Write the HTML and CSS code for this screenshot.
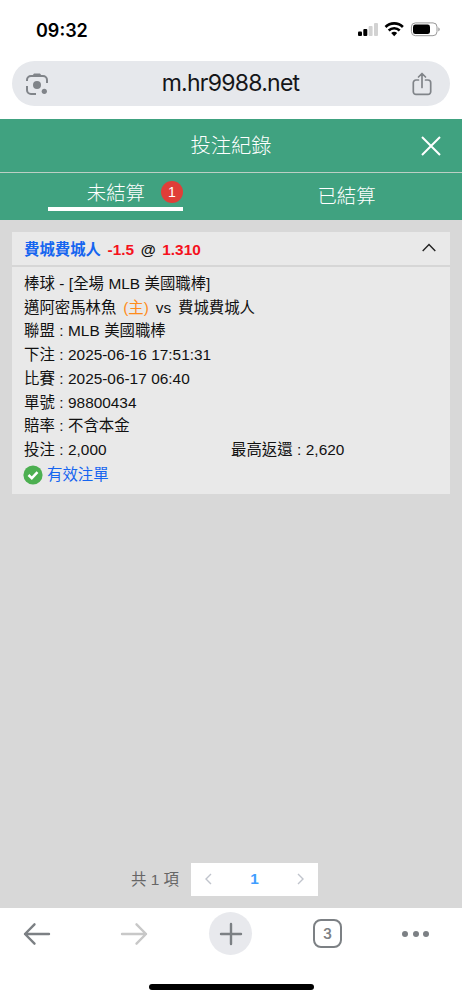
FILE: index.html
```html
<!DOCTYPE html>
<html lang="zh-Hant"><head>
    <meta charset="UTF-8">
    <meta name="viewport" content="width=device-width, initial-scale=1.0">
    <title>投注紀錄</title>
    <link rel="stylesheet" href="styles.css">
</head>
<body>
    <div class="status">
        <span class="time">09:32</span>
        <svg class="signals" width="84" height="16" viewBox="0 0 84 16">
            <rect x="1" y="9.5" width="4" height="4.5" rx="1"/>
            <rect x="6.3" y="7" width="4" height="7" rx="1"/>
            <rect x="11.6" y="4" width="4" height="10" rx="1" fill="#d2d2d2"/>
            <rect x="17" y="1" width="4" height="13" rx="1" fill="#d2d2d2"/>
            <g fill="none" stroke="#000" stroke-width="2.6">
                <path d="M28.5 5a12.3 12.3 0 0 1 17.4 0"/>
                <path d="M31.7 8.5a8 8 0 0 1 11 0"/>
            </g>
            <path d="M34.2 11.1a4.4 4.4 0 0 1 6 0l-3 3.1z"/>
            <rect x="54.4" y="0.9" width="25.6" height="12.8" rx="4" fill="none" stroke="#999"/>
            <rect x="56" y="2.5" width="17" height="9.6" rx="2.4"/>
            <path d="M81.3 5.2c2 .8 2 3.4 0 4.2z" fill="#999"/>
        </svg>
    </div>
    <div class="address">
        <svg width="24" height="24" viewBox="0 0 24 24" fill="none" stroke="#808489" stroke-width="2">
            <path d="M2 9V8a4 4 0 0 1 4-4h12a4 4 0 0 1 4 4v3M2 14v4a4 4 0 0 0 4 4h5"/>
            <path d="M7 4l2-2.5h6L17 4z" fill="#808489" stroke="none"/>
            <circle cx="12" cy="13" r="4" fill="#808489" stroke="none"/>
            <circle cx="19.3" cy="19.3" r="2.6" fill="#808489" stroke="none"/>
        </svg>
        <span class="url">m.hr9988.net</span>
        <svg width="20" height="24" viewBox="0 0 20 24" fill="none" stroke="#808489" stroke-width="1.7" stroke-linecap="round" stroke-linejoin="round">
            <path d="M6.5 8H4a2.7 2.7 0 0 0-2.7 2.7v9A2.7 2.7 0 0 0 4 22.4h12a2.7 2.7 0 0 0 2.7-2.7v-9A2.7 2.7 0 0 0 16 8h-2.5M10 15.5V1.8M6.5 5L10 1.5 13.5 5"/>
        </svg>
    </div>
    <div class="page">
        <div class="title">
            <h1>投注紀錄</h1>
            <svg class="close" width="20" height="20" viewBox="0 0 20 20" fill="none" stroke="#fff" stroke-width="2">
                <path d="M1 1l18 18M19 1L1 19"/>
            </svg>
        </div>
        <div class="tabs">
            <div class="tab active"><span>未結算</span><b class="badge">1</b></div>
            <div class="tab"><span>已結算</span></div>
        </div>
        <div class="card">
            <div class="card-head">
                <div><span class="team">費城費城人</span> <span class="odds">-1.5</span> @ <span class="odds">1.310</span></div>
                <svg width="14" height="9" viewBox="0 0 14 9" fill="none" stroke="#222" stroke-width="1.4">
                    <path d="M.7 8L7 1.5 13.3 8"/>
                </svg>
            </div>
            <div class="card-body">
                <p>棒球 - [全場 MLB 美國職棒]</p>
                <p class="match">邁阿密馬林魚 <span class="home">(主)</span> vs <span class="away">費城費城人</span></p>
                <p>聯盟 : MLB 美國職棒</p>
                <p>下注 : 2025-06-16 17:51:31</p>
                <p>比賽 : 2025-06-17 06:40</p>
                <p>單號 : 98800434</p>
                <p>賠率 : 不含本金</p>
                <div class="amounts"><p>投注 : 2,000</p><p>最高返還 : 2,620</p></div>
                <div class="valid">
                    <svg width="20" height="20" viewBox="0 0 20 20">
                        <circle cx="10" cy="10" r="9.6" fill="#4caf50"/>
                        <path d="M5.5 10l3.3 3.2 5.7-6" fill="none" stroke="#fff" stroke-width="2.5"/>
                    </svg>
                    <span>有效注單</span>
                </div>
            </div>
        </div>
        <div class="pager">
            <span class="total">共 1 項</span>
            <div class="pages">
                <svg width="7" height="12" viewBox="0 0 7 12"><path d="M6 1L1 6l5 5"/></svg>
                <b>1</b>
                <svg width="7" height="12" viewBox="0 0 7 12"><path d="M1 1l5 5-5 5"/></svg>
            </div>
        </div>
    </div>
    <div class="toolbar">
        <svg class="back" width="28" height="24" viewBox="0 0 28 24"><path d="M26 12H2M11.5 2.3L2 12l9.5 9.7"/></svg>
        <svg class="disabled" width="28" height="24" viewBox="0 0 28 24"><path d="M2 12h24M16.5 2.3L26 12l-9.5 9.7"/></svg>
        <div class="plus"><svg width="24" height="24" viewBox="0 0 24 24"><path d="M12 2v20M2 12h20"/></svg></div>
        <div class="count">3</div>
        <div class="dots"><i></i><i></i><i></i></div>
    </div>
    <div class="home-bar"></div>
</body>
</html>
```
FILE: styles.css
```css
* {
    box-sizing: border-box;
}
body {
    margin: 0;
    height: 1000px;
    display: flex;
    flex-direction: column;
    overflow: hidden;
    background: #fff;
    color: #111;
    font-family: "Liberation Sans", "Noto Sans CJK TC", sans-serif;
    font-size: 15.4px;
}
svg {
    display: block;
    flex: none;
}
p, h1 {
    margin: 0;
}
.status {
    height: 60px;
    padding: 0 21px 0 36px;
    display: flex;
    align-items: center;
    justify-content: space-between;
}
.time {
    font: 600 18px Inter, sans-serif;
    color: #000;
}
.address {
    height: 45px;
    margin: 1px 12px 0;
    padding: 0 18px 0 13px;
    border-radius: 23px;
    background: #e6e8ec;
    display: flex;
    align-items: center;
    justify-content: space-between;
}
.url {
    font: 23px/43px Inter, sans-serif;
    letter-spacing: -0.75px;
    color: #151619;
}
.page {
    height: 789px;
    margin-top: 13px;
    background: #d8d8d8;
    display: flex;
    flex-direction: column;
}
.title {
    height: 54px;
    border-bottom: 1px solid #bccfc5;
    background: #40a280;
    color: #fff;
    display: grid;
    grid-template-columns: 1fr auto 1fr;
    align-items: center;
}
.title h1 {
    grid-column: 2;
    font-size: 20.3px;
    font-weight: 300;
    line-height: 52px;
}
.close {
    justify-self: end;
    margin-right: 21px;
}
.tabs {
    height: 47px;
    padding-bottom: 4px;
    background: #40a280;
    color: #fff;
    display: grid;
    grid-template-columns: 1fr 1fr;
    justify-items: center;
    align-items: center;
    font-size: 19.4px;
    font-weight: 300;
}
.tab.active {
    width: 135px;
    height: 35px;
    margin-bottom: 3px;
    border-bottom: 4px solid #fff;
    display: flex;
    align-items: center;
    justify-content: flex-end;
    gap: 16px;
}
.badge {
    width: 22px;
    height: 22px;
    margin-top: 2px;
    border-radius: 50%;
    background: #e03e38;
    font-size: 14px;
    font-weight: normal;
    line-height: 22px;
    text-align: center;
}
.card {
    margin: 12px 12px 0;
    height: 262px;
    background: #e9e9e9;
}
.card-head {
    height: 35px;
    padding: 0 14px 2px 12px;
    border-bottom: 2px solid #d6d6d6;
    display: flex;
    align-items: center;
    justify-content: space-between;
    font-weight: bold;
    word-spacing: 2.3px;
}
.team {
    color: #1565f0;
}
.odds {
    color: #f5121d;
}
.card-body {
    padding: 5px 12px;
    line-height: 23.7px;
    word-spacing: 0.2px;
}
.match {
    word-spacing: 2.6px;
}
.home {
    color: #ff8c1a;
}
.amounts {
    display: grid;
    grid-template-columns: 1fr 1fr;
}
.valid {
    height: 26px;
    margin-left: -1px;
    display: flex;
    align-items: center;
    gap: 4px;
    color: #1565f0;
}
.pager {
    margin: auto 0 12px 131px;
    display: flex;
    align-items: center;
    gap: 12px;
    color: #666;
}
.total {
    padding-bottom: 4px;
}
.pages {
    width: 127px;
    height: 33px;
    padding: 0 14px 2px;
    background: #fff;
    display: flex;
    align-items: center;
    justify-content: space-between;
    color: #409eff;
}
.pages path {
    fill: none;
    stroke: #c0c4cc;
    stroke-width: 1.4;
}
.toolbar {
    height: 51px;
    padding-left: 23px;
    display: flex;
    align-items: center;
    gap: 61px;
}
.toolbar path {
    fill: none;
    stroke: #7c8084;
    stroke-width: 2.4;
    stroke-linecap: round;
    stroke-linejoin: round;
}
.toolbar .back {
    margin-right: 8px;
}
.toolbar .disabled path {
    stroke: #c8c8c8;
}
.plus {
    width: 43px;
    height: 43px;
    border-radius: 50%;
    background: #e8e9ed;
    display: grid;
    place-items: center;
}
.count {
    width: 29px;
    height: 29px;
    border: 2px solid #7c8084;
    border-radius: 8px;
    color: #7c8084;
    font: 600 14px/25px Inter, sans-serif;
    text-align: center;
}
.dots {
    margin-left: -1px;
    display: flex;
    gap: 4.5px;
}
.dots i {
    width: 6px;
    height: 6px;
    border-radius: 50%;
    background: #7c8084;
}
.home-bar {
    width: 165px;
    height: 6px;
    margin: 25px auto 0;
    border-radius: 3px;
    background: #000;
}
```
